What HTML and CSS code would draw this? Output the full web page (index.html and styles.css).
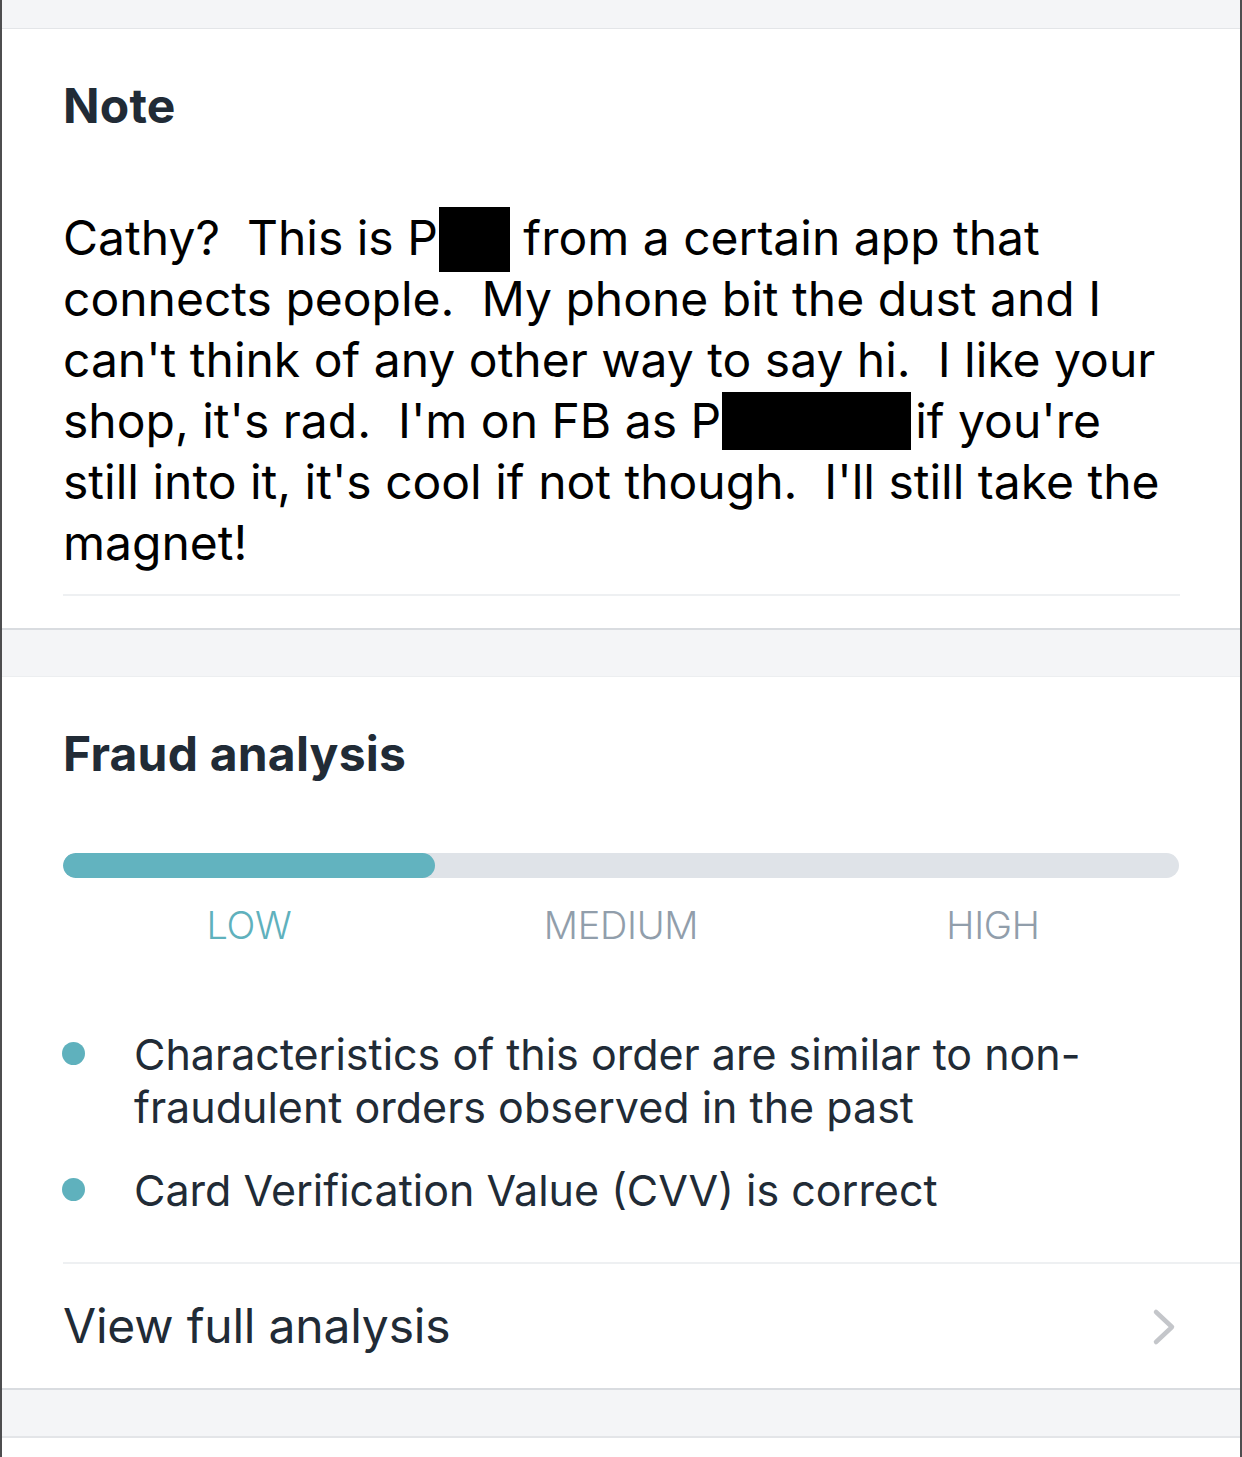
FILE: index.html
```html
<!DOCTYPE html>
<html>
<head>
<meta charset="utf-8">
<link rel="stylesheet" href="styles.css">
</head>
<body>
<div class="frame">
  <div class="band band-top"></div>
  <section class="card note-card">
    <h2 class="card-title">Note</h2>
    <div class="note-text">
      <div class="line">Cathy?  This is P<span class="redact redact-a"></span> from a certain app that</div>
      <div class="line">connects people.  My phone bit the dust and I</div>
      <div class="line">can't think of any other way to say hi.  I like your</div>
      <div class="line">shop, it's rad.  I'm on FB as P<span class="redact redact-b"></span>if you're</div>
      <div class="line">still into it, it's cool if not though.  I'll still take the</div>
      <div class="line">magnet!</div>
    </div>
    <div class="note-sep"></div>
  </section>
  <div class="band band-mid"></div>
  <section class="card fraud-card">
    <h2 class="card-title fraud-title">Fraud analysis</h2>
    <div class="meter">
      <div class="meter-fill" style="width:33.3%"></div>
    </div>
    <div class="levels">
      <span class="level active">LOW</span>
      <span class="level">MEDIUM</span>
      <span class="level">HIGH</span>
    </div>
    <ul class="reasons">
      <li class="reason"><span class="dot"></span><span class="reason-text">Characteristics of this order are similar to non-<br>fraudulent orders observed in the past</span></li>
      <li class="reason"><span class="dot"></span><span class="reason-text">Card Verification Value (CVV) is correct</span></li>
    </ul>
    <div class="view-row">
      <span class="view-label">View full analysis</span>
      <svg class="chevron" width="28" height="40" viewBox="0 0 28 40"><path d="M6 5 L22 20 L6 35" fill="none" stroke="#c4c6ca" stroke-width="4.5" stroke-linecap="round" stroke-linejoin="round"/></svg>
    </div>
  </section>
  <div class="band band-bottom"></div>
  <div class="tail"></div>
</div>
</body>
</html>
```
FILE: styles.css
```css
* { box-sizing: border-box; }
html, body { margin: 0; padding: 0; background: #ffffff; }
body {
  font-family: Inter, "Noto Sans", "Liberation Sans", sans-serif;
  color: #212b36;
}
.frame {
  width: 1242px;
  height: 1457px;
  overflow: hidden;
  border-left: 2px solid #4d4d4f;
  border-right: 2px solid #4d4d4f;
  display: flex;
  flex-direction: column;
}
.band {
  background: #f4f5f7;
  flex: none;
}
.band-top {
  height: 29px;
  border-bottom: 1px solid #e3e5e8;
}
.band-mid {
  height: 49px;
  border-top: 2px solid #d9dce0;
  border-bottom: 1px solid #eceef0;
}
.band-bottom {
  height: 50px;
  border-top: 2px solid #d9dce0;
  border-bottom: 2px solid #e3e5e8;
}
.tail { flex: 1; background: #fff; }
.card {
  background: #fff;
  padding-left: 61px;
  flex: none;
}
.card-title {
  margin: 0;
  font-size: 48px;
  font-weight: 700;
  line-height: 56px;
  color: #212b36;
  letter-spacing: 0.2px;
}
.note-card {
  height: 599px;
  padding-top: 49px;
  padding-right: 60px;
}
.note-text {
  margin-top: 73px;
  font-size: 48px;
  line-height: 61px;
  color: #000;
  letter-spacing: 0;
}
.line { white-space: pre; }
.redact {
  display: inline-block;
  position: relative;
  height: 1px;
}
.redact::after {
  content: "";
  position: absolute;
  left: 0; right: 0;
  background: #000;
}
.redact-a { width: 71px; margin-left: 1px; }
.redact-a::after { top: -47px; height: 65px; }
.redact-b { width: 189px; margin-left: 1px; margin-right: 4px; }
.redact-b::after { top: -45px; height: 58px; }
.note-sep {
  margin-top: 21px;
  height: 2px;
  background: #eef0f2;
}
.fraud-card {
  height: 711px;
  padding-top: 49px;
  display: flex;
  flex-direction: column;
}
.fraud-title { padding-right: 60px; }
.meter {
  margin-top: 71px;
  margin-right: 61px;
  height: 25px;
  border-radius: 13px;
  background: #dfe3e8;
  overflow: hidden;
}
.meter-fill {
  height: 100%;
  background: #62b3bf;
  border-radius: 13px;
}
.levels {
  margin-right: 61px;
  margin-top: 24px;
  display: grid;
  grid-template-columns: 1fr 1fr 1fr;
  font-size: 38px;
  font-weight: 300;
  line-height: 46px;
  color: #919eab;
  letter-spacing: -0.3px;
}
.level { text-align: center; }
.level.active { color: #5fb1bd; }
.reasons {
  list-style: none;
  margin: 80px 0 0 0;
  padding: 0;
  display: flex;
  flex-direction: column;
  gap: 30px;
}
.reason {
  display: flex;
  align-items: flex-start;
}
.dot {
  flex: none;
  width: 23px;
  height: 23px;
  border-radius: 50%;
  background: #5fb1bd;
  margin-top: 14px;
  margin-left: -1px;
  margin-right: 49px;
}
.reason-text {
  font-size: 43px;
  line-height: 53px;
  color: #212b36;
  letter-spacing: 0;
}
.view-row {
  margin-top: 45px;
  border-top: 2px solid #eef0f2;
  height: 125px;
  display: flex;
  align-items: center;
  justify-content: space-between;
  padding-right: 62px;
}
.view-label {
  font-size: 48px;
  color: #212b36;
  letter-spacing: -0.2px;
}
.chevron { flex: none; margin-top: 2px; }
```
